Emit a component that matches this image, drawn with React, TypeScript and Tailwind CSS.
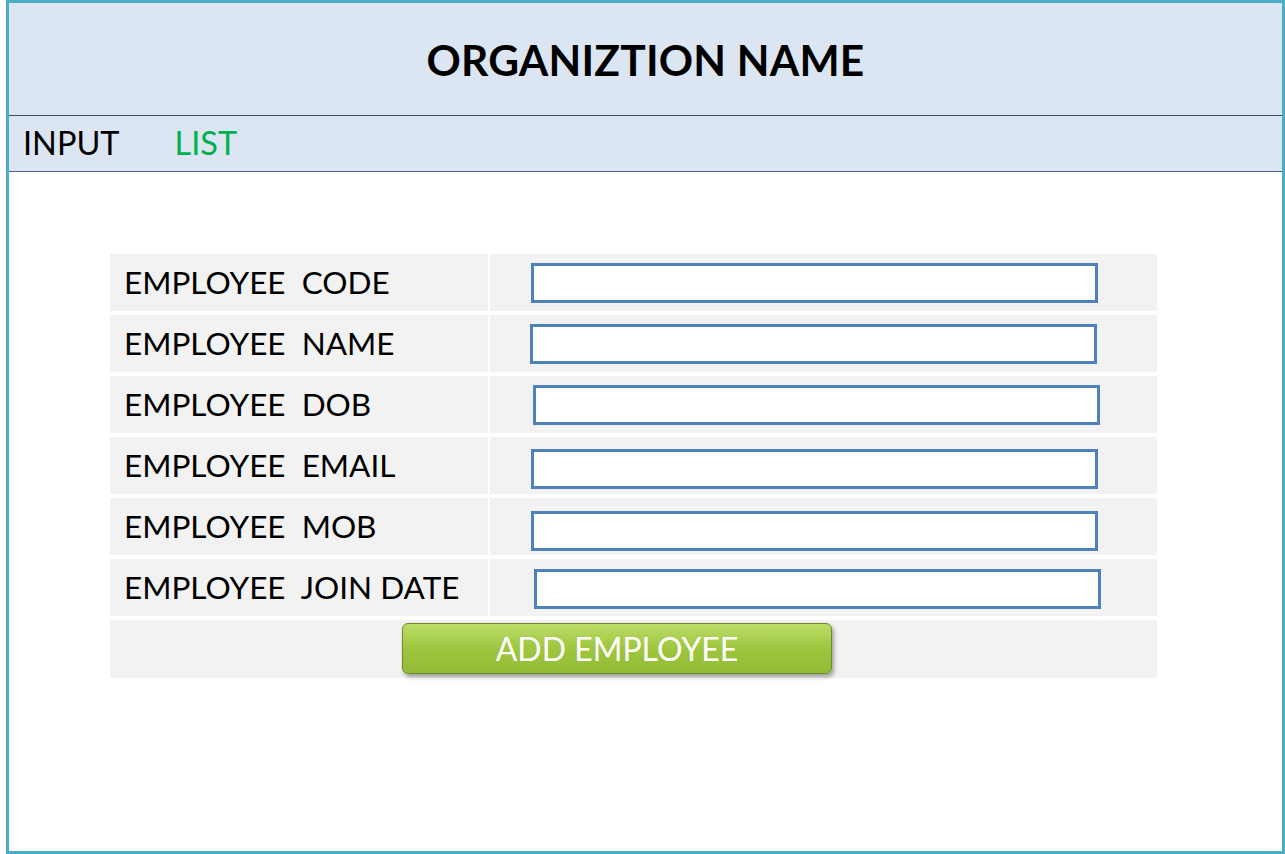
import React from 'react';

// Form rows; the small per-row offsets follow the mockup's hand-placed boxes.
const fields = [
  { label: 'EMPLOYEE  CODE', box: 'ml-[41px] mt-[9px]' },
  { label: 'EMPLOYEE  NAME', box: 'ml-[40px] mt-[9px]' },
  { label: 'EMPLOYEE  DOB', box: 'ml-[43px] mt-[9px]' },
  { label: 'EMPLOYEE  EMAIL', box: 'ml-[41px] mt-[12px]' },
  { label: 'EMPLOYEE  MOB', box: 'ml-[41px] mt-[13px]' },
  { label: 'EMPLOYEE  JOIN DATE', box: 'ml-[44px] mt-[10px]' },
];

const font = { fontFamily: 'Lato, "Open Sans", sans-serif' };

export default function App() {
  return (
    <div className="w-full h-[854px] bg-white" style={font}>
      <div className="ml-[6px] w-[1279px] h-[854px] border-[3px] border-[#4bacc6] flex flex-col bg-white">
        {/* header */}
        <div className="h-[113px] bg-[#dce6f2] border-b border-[#3e5063] flex items-center justify-center">
          <h1 className="text-[42.5px] font-bold text-black tracking-[0.2px] mt-[2px]">ORGANIZTION NAME</h1>
        </div>

        {/* nav */}
        <div className="h-[56px] bg-[#dce6f2] border-b border-[#4e5d8c] flex items-center pl-[14px] gap-[55px] text-[32.5px]">
          <span className="text-black">INPUT</span>
          <span className="text-[#00b050]">LIST</span>
        </div>

        {/* form */}
        <div className="pt-[82px] pl-[101px]">
          <div className="w-[1047px] flex flex-col gap-[4px]">
            {fields.map((f) => (
              <div key={f.label} className="h-[57px] flex gap-[2px]">
                <div className="w-[378px] bg-[#f2f2f2] flex items-center pl-[14px] text-[31.5px] text-black whitespace-pre">
                  {f.label}
                </div>
                <div className="flex-1 bg-[#f2f2f2]">
                  <div className={`${f.box} w-[567px] h-[40px] bg-white border-[3px] border-[#4f81bd]`} />
                </div>
              </div>
            ))}
            <div className="h-[58px] bg-[#f2f2f2] pl-[292px] pt-[3px]">
              <button className="w-[430px] h-[51px] rounded-[6px] border border-[#6f8a2a] bg-gradient-to-b from-[#bcdc68] via-[#9ec63e] to-[#93ba36] shadow-[2px_3px_4px_rgba(0,0,0,0.35)] text-white text-[32px] flex items-center justify-center">
                ADD EMPLOYEE
              </button>
            </div>
          </div>
        </div>
      </div>
    </div>
  );
}
